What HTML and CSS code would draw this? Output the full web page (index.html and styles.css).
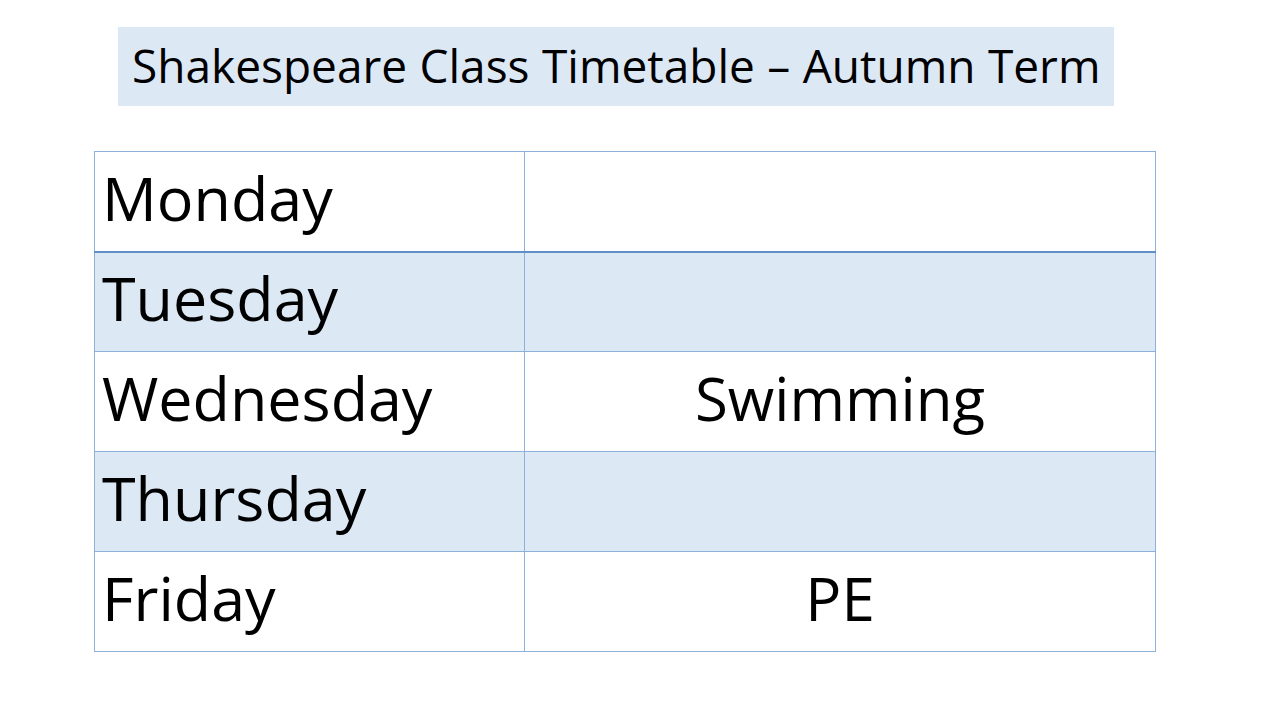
FILE: index.html
```html
<!DOCTYPE html>
<html lang="en">
<head>
<meta charset="utf-8">
<title>Shakespeare Class Timetable</title>
<link rel="stylesheet" href="styles.css">
</head>
<body>
<main class="page">
  <h1 class="title">Shakespeare Class Timetable – Autumn Term</h1>
  <table class="timetable">
    <tbody>
      <tr class="row row-white row-first"><td class="day">Monday</td><td class="activity"></td></tr>
      <tr class="row row-blue"><td class="day">Tuesday</td><td class="activity"></td></tr>
      <tr class="row row-white"><td class="day">Wednesday</td><td class="activity">Swimming</td></tr>
      <tr class="row row-blue"><td class="day">Thursday</td><td class="activity"></td></tr>
      <tr class="row row-white"><td class="day">Friday</td><td class="activity pe">PE</td></tr>
    </tbody>
  </table>
</main>
</body>
</html>
```

FILE: styles.css
```css
html, body {
  margin: 0;
  padding: 0;
  background: #ffffff;
}

body {
  font-family: "Open Sans", "Noto Sans", sans-serif;
  color: #000;
  width: 1280px;
  height: 720px;
  overflow: hidden;
}

.page {
  display: flex;
  flex-direction: column;
  align-items: flex-start;
  padding-top: 27px;
}

.title {
  margin: 0 0 0 118px;
  width: 996px;
  height: 79px;
  box-sizing: border-box;
  background: #dde8f5;
  font-weight: 400;
  font-size: 46px;
  line-height: 77px;
  padding-left: 14px;
  letter-spacing: 0;
  word-spacing: 0.5px;
  white-space: nowrap;
}

.timetable {
  margin: 45px 0 0 94px;
  width: 1062px;
  border-collapse: collapse;
  table-layout: fixed;
}

.row td {
  height: 100px;
  padding: 0;
  border: 1px solid #8fb0d8;
  vertical-align: middle;
  box-sizing: border-box;
}

.row-first td {
  border-bottom: 2px solid #5f90c8;
}

.row-white { background: #ffffff; }
.row-blue { background: #dde8f5; }

.day {
  width: 430px;
  font-size: 61px;
  line-height: 1;
  padding-left: 7px !important;
  padding-bottom: 8px !important;
  white-space: nowrap;
}

.activity {
  text-align: center;
  font-size: 60px;
  line-height: 1;
  padding-bottom: 8px !important;
}
```
